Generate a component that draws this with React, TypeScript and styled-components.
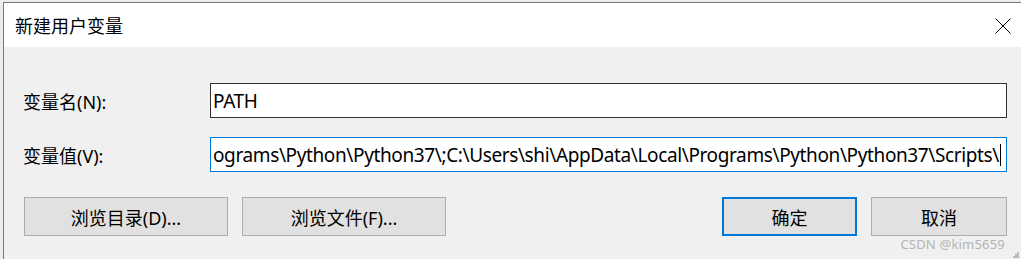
import * as React from 'react';
import styled, { createGlobalStyle } from 'styled-components';

const GlobalStyle = createGlobalStyle`
  html, body {
    margin: 0;
    padding: 0;
    background: #e6e6e6;
    overflow: hidden;
  }
  body {
    font-family: 'Noto Sans', 'Noto Sans CJK SC', sans-serif;
  }
`;

const Backdrop = styled.div`
  position: relative;
  width: 1021px;
  height: 259px;
  padding: 2px 0 0 3px;
  box-sizing: border-box;
  background: #ececec;
  overflow: hidden;
`;

const Dialog = styled.div`
  display: flex;
  flex-direction: column;
  height: 100%;
  border-top: 1px solid #777;
  border-left: 1px solid #777;
  background: #f0f0f0;
`;

const TitleBar = styled.div`
  display: flex;
  align-items: center;
  justify-content: space-between;
  height: 44px;
  padding: 0 10px 0 11px;
  background: #fff;
  font-family: 'Noto Sans CJK SC', sans-serif;
  font-size: 18px;
  color: #000;
`;

const CloseButton = styled.div`
  display: flex;
  align-items: center;
  justify-content: center;
  width: 16px;
  height: 16px;
  margin-top: 2px;
`;

const Body = styled.div`
  flex: 1;
  display: flex;
  flex-direction: column;
  padding: 36px 14px 0 19px;
`;

const Form = styled.div`
  display: grid;
  grid-template-columns: 187px 1fr;
  row-gap: 19px;
  align-items: center;
`;

const Label = styled.div`
  font-family: 'Noto Sans', 'Noto Sans CJK SC', sans-serif;
  font-size: 18px;
  color: #000;
  padding-top: 1px;
`;

const Field = styled.div<{ $focused?: boolean }>`
  display: flex;
  align-items: center;
  height: 35px;
  box-sizing: border-box;
  padding: 0 4px 0 2px;
  background: #fff;
  border: 1px solid ${p => (p.$focused ? '#0078d7' : '#333')};
  overflow: hidden;
  white-space: nowrap;
  font-family: 'Noto Sans', sans-serif;
  font-size: 19px;
  letter-spacing: -0.38px;
  color: #000;
`;

const Caret = styled.span`
  display: inline-block;
  width: 1px;
  height: 22px;
  margin-left: 1px;
  background: #000;
  flex-shrink: 0;
`;

const ButtonRow = styled.div`
  display: flex;
  align-items: center;
  margin-top: 25px;
  padding-left: 1px;
`;

const Spacer = styled.div`
  flex: 1;
`;

const Button = styled.div<{ $width: number; $primary?: boolean }>`
  display: flex;
  align-items: center;
  justify-content: center;
  width: ${p => p.$width}px;
  height: 39px;
  box-sizing: border-box;
  margin-left: ${p => (p.$primary ? 0 : 14)}px;
  background: #e1e1e1;
  border: ${p => (p.$primary ? '2px solid #0078d7' : '1px solid #adadad')};
  font-family: 'Noto Sans', 'Noto Sans CJK SC', sans-serif;
  font-size: 18px;
  color: #000;
  &:first-child {
    margin-left: 0;
  }
`;

const Watermark = styled.div`
  position: absolute;
  right: 16px;
  bottom: 6px;
  font-family: 'Noto Sans', sans-serif;
  font-size: 13px;
  letter-spacing: 0.2px;
  color: #b4b4b4;
`;

const Grip = styled.svg`
  position: absolute;
  right: 2px;
  bottom: 1px;
`;

const pathValue =
  'ograms\\Python\\Python37\\;C:\\Users\\shi\\AppData\\Local\\Programs\\Python\\Python37\\Scripts\\';

const App: React.FC = () => (
  <Backdrop>
    <GlobalStyle />
    <Dialog>
      <TitleBar>
        <span>新建用户变量</span>
        <CloseButton>
          <svg width="16" height="16" viewBox="0 0 16 16">
            <path d="M0.5 0.5 L15.5 15.5 M15.5 0.5 L0.5 15.5" stroke="#000" strokeWidth="1" />
          </svg>
        </CloseButton>
      </TitleBar>
      <Body>
        <Form>
          <Label>变量名(N):</Label>
          <Field>PATH</Field>
          <Label>变量值(V):</Label>
          <Field $focused>
            <span>{pathValue}</span>
            <Caret />
          </Field>
        </Form>
        <ButtonRow>
          <Button $width={204}>浏览目录(D)...</Button>
          <Button $width={204}>浏览文件(F)...</Button>
          <Spacer />
          <Button $width={135} $primary>确定</Button>
          <Button $width={136}>取消</Button>
        </ButtonRow>
      </Body>
    </Dialog>
    <Watermark>CSDN @kim5659</Watermark>
    <Grip width="6" height="6" viewBox="0 0 6 6">
      <rect x="4" y="0" width="2" height="2" fill="#bbb" />
      <rect x="2" y="2" width="2" height="2" fill="#bbb" />
      <rect x="4" y="2" width="2" height="2" fill="#bbb" />
      <rect x="0" y="4" width="2" height="2" fill="#bbb" />
      <rect x="2" y="4" width="2" height="2" fill="#bbb" />
      <rect x="4" y="4" width="2" height="2" fill="#bbb" />
    </Grip>
  </Backdrop>
);

export default App;
